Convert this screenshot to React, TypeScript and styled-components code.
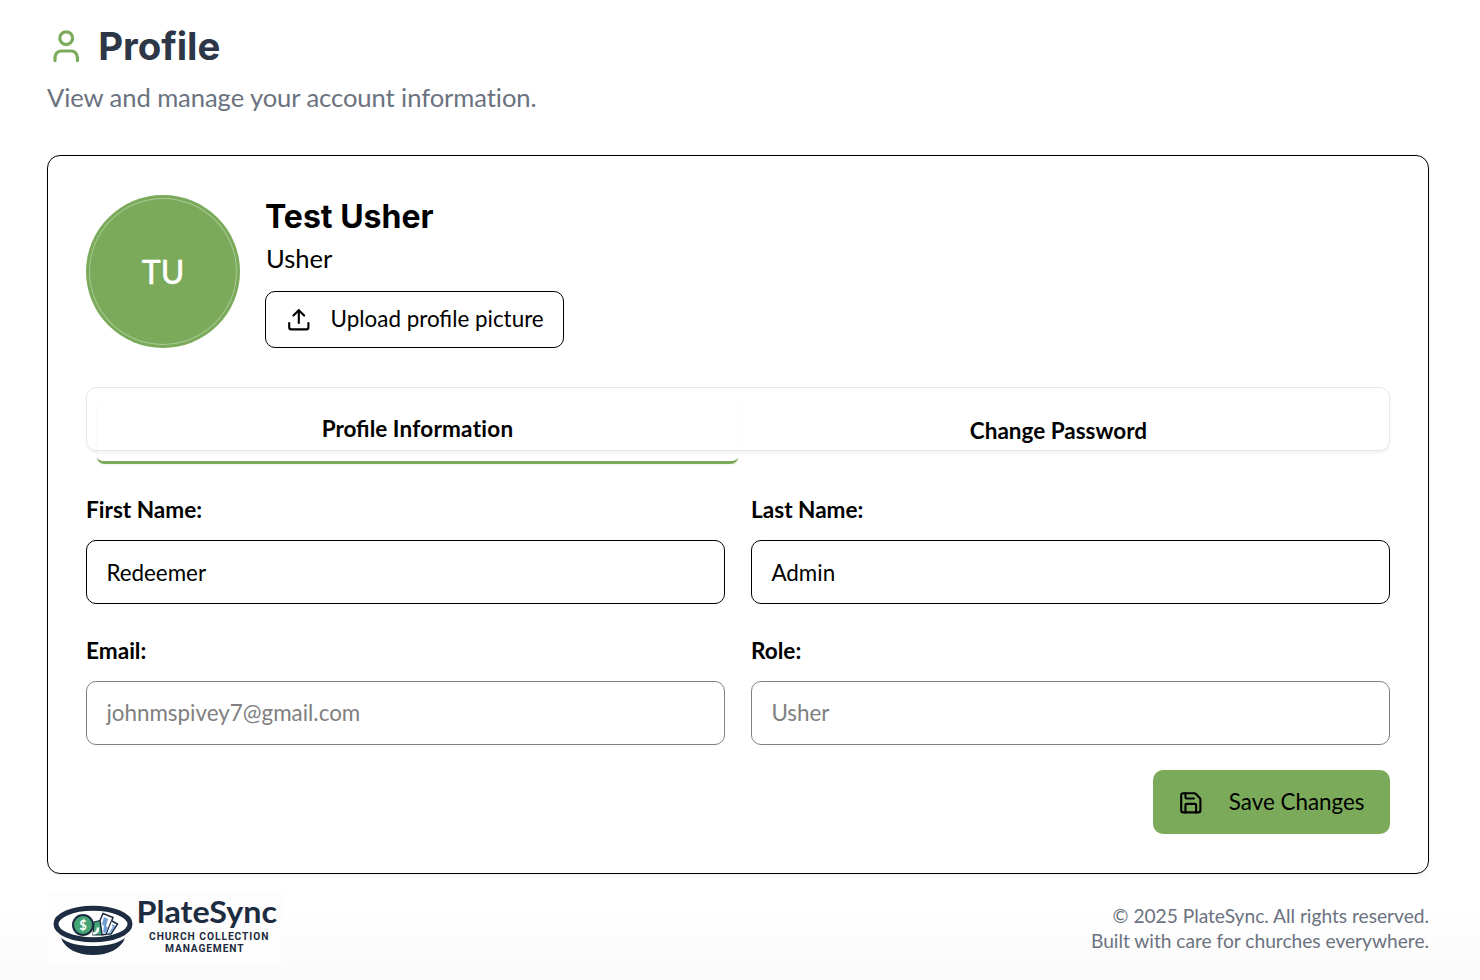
import React from "react";
import styled, { createGlobalStyle } from "styled-components";
import { Save, Upload, User } from "lucide-react";

const GlobalStyle = createGlobalStyle`
  *, *::before, *::after { box-sizing: border-box; }
  body { margin: 0; background: #fff; font-family: Lato, "Liberation Sans", sans-serif; color: #000; }
  h1, h2, p { margin: 0; }
  button, input { font: inherit; color: inherit; }
`;

const GREEN = "#7bab5a";

const Page = styled.div`
  width: 1480px;
  height: 980px;
  overflow: hidden;
  padding: 23px 51px 0 47px;
  background: linear-gradient(to bottom, #fff 0, #fff 910px, #fafafa 980px);
`;

const Header = styled.header`
  height: 132px;
`;

const TitleRow = styled.div`
  display: flex;
  align-items: center;
  gap: 12.8px;
  height: 46px;
  color: ${GREEN};
`;

const Title = styled.h1`
  font: 700 38.4px/46px Inter, sans-serif;
  letter-spacing: -0.05px;
  color: #2d3748;
`;

const Subtitle = styled.p`
  margin-top: 9px;
  font-size: 25.6px;
  line-height: 38px;
  letter-spacing: -0.08px;
  font-variant-ligatures: none;
  color: #6b7280;
`;

const Card = styled.main`
  height: 719px;
  padding: 39px 38px;
  border: 1px solid #000;
  border-radius: 13px;
  background: #fff;
  box-shadow: 0 2px 4px rgba(0, 0, 0, 0.05);
`;

const Identity = styled.section`
  display: flex;
  gap: 25px;
  height: 153px;
`;

const Avatar = styled.div`
  flex: none;
  width: 154px;
  height: 153px;
  padding: 3px;
  border-radius: 50%;
  background: ${GREEN};
`;

const AvatarFace = styled.div`
  display: flex;
  align-items: center;
  justify-content: center;
  height: 100%;
  padding-bottom: 1px;
  border: 0.5px solid rgba(255, 255, 255, 0.35);
  border-radius: 50%;
  font-size: 32px;
  font-weight: 500;
  color: #fff;
  -webkit-text-stroke: 0.3px #fff;
`;

const Details = styled.div`
  display: flex;
  flex-direction: column;
  align-items: flex-start;
`;

const Name = styled.h2`
  font: 700 32px/43px Inter, sans-serif;
`;

const RoleText = styled.p`
  padding-left: 1px;
  font-size: 25.6px;
  line-height: 41px;
  margin-bottom: 12px;
`;

const UploadButton = styled.button`
  display: flex;
  align-items: center;
  width: 299px;
  height: 57px;
  padding: 0 0 0 20px;
  gap: 19px;
  border: 1px solid #000;
  border-radius: 10px;
  background: #fff;
  font-size: 22.4px;
  white-space: nowrap;
`;

const ButtonText = styled.span`
  padding-bottom: 2px;
`;

const Tabs = styled.div`
  display: grid;
  grid-template-columns: 641px 641px;
  height: 64px;
  margin-top: 39px;
  padding: 9px 10px;
  border: 1px solid #e5e7eb;
  border-radius: 10px;
  box-shadow: 0 2px 3px rgba(0, 0, 0, 0.05);
`;

const Tab = styled.button<{ $active?: boolean }>`
  height: 67px;
  padding: ${(p) => (p.$active ? "0 0 2px" : "0")};
  border: 0;
  border-bottom: ${(p) => (p.$active ? `3px solid ${GREEN}` : "0")};
  border-radius: 7px;
  background: transparent;
  box-shadow: ${(p) => (p.$active ? "0 1px 3px rgba(0, 0, 0, 0.05)" : "none")};
  font-size: 22.5px;
  font-weight: 700;
`;

const PlainLetters = styled.span`
  font-variant-ligatures: none;
  letter-spacing: 0.25px;
`;

const Form = styled.form`
  display: grid;
  grid-template-columns: 639px 639px;
  column-gap: 26px;
  margin-top: 44px;
`;

const Field = styled.label`
  display: flex;
  flex-direction: column;
  height: 141px;
  font-size: 22.6px;
  font-weight: 700;
  line-height: 30px;
`;

const Input = styled.input`
  width: 100%;
  height: 64px;
  margin-top: 15px;
  padding: 0 19px 0 19.4px;
  border: 1px solid #000;
  border-radius: 10px;
  outline: 0;
  background: #fff;
  font-size: 22.4px;
  font-weight: 400;

  &:disabled { padding-bottom: 2px; border-color: #808080; color: #808080; }
`;

const SaveButton = styled.button`
  display: flex;
  align-items: center;
  grid-column: 2;
  justify-self: end;
  width: 237px;
  height: 64px;
  margin-top: -7px;
  padding: 1px 0 0 24.6px;
  gap: 25.6px;
  border: 0;
  border-radius: 10px;
  background: ${GREEN};
  font-size: 22.4px;
  white-space: nowrap;
`;

const Footer = styled.footer`
  display: flex;
  justify-content: space-between;
  padding-top: 19px;
`;

const Legal = styled.div`
  padding-top: 10px;
  text-align: right;
  font-size: 19.2px;
  line-height: 25px;
  letter-spacing: -0.02px;
  color: #6b7280;
`;

function Logo() {
  return (
    <svg width="237" height="69" viewBox="47 893 237 69" role="img" aria-label="PlateSync">
      <rect x="47" y="893" width="237" height="69" fill="#fdfdfd" />
      <path d="M61 938c4 11 17 17 32 17s28-6 32-17c-8 6-19 8-32 8s-24-2-32-8z" fill="#1d2c40" />
      <ellipse cx="93" cy="924" rx="37" ry="15.8" fill="#fff" stroke="#1d2c40" strokeWidth="5" />
      <path d="M94 922l8-2 1 15h-10z" fill="#46a574" stroke="#1d2c40" strokeWidth="1.2" />
      <path d="M103 913.5l10 4-7 17h-4l-2-14z" fill="#fff" stroke="#1d2c40" strokeWidth="1.5" />
      <path d="M104 917l4 2-2 7 2 2-2 5-3-1 1-6-2-2z" fill="#6d9ed8" />
      <path d="M112 921l5.5 3-6.5 10h-4" fill="#fff" stroke="#1d2c40" strokeWidth="1.5" />
      <path d="M112 925l2 1-5 8" fill="none" stroke="#6d9ed8" strokeWidth="1.4" />
      <path d="M93 933.5q5 0 5-6" fill="none" stroke="#fff" strokeWidth="2.5" />
      <circle cx="83" cy="925" r="10" fill="#46a574" stroke="#1d2c40" strokeWidth="2" />
      <g fill="#1d2c40">
        <text x="83" y="929.5" fontFamily="Lato" fontSize="13" fontWeight="700" fill="#fff" textAnchor="middle">$</text>
        <text x="136.5" y="923.3" fontFamily="Lato" fontSize="29.5" fontWeight="700" textLength="140.5" lengthAdjust="spacingAndGlyphs">PlateSync</text>
        <text x="149" y="940.3" fontFamily="Roboto" fontSize="10.2" fontWeight="700" textLength="119.5">CHURCH COLLECTION</text>
        <text x="165" y="952" fontFamily="Roboto" fontSize="10.2" fontWeight="700" textLength="78.5">MANAGEMENT</text>
      </g>
    </svg>
  );
}

export default function App() {
  return (
    <Page>
      <GlobalStyle />
      <Header>
        <TitleRow>
          <User size={38.4} />
          <Title>Profile</Title>
        </TitleRow>
        <Subtitle>View and manage your account information.</Subtitle>
      </Header>
      <Card>
        <Identity>
          <Avatar><AvatarFace>TU</AvatarFace></Avatar>
          <Details>
            <Name>Test Usher</Name>
            <RoleText>Usher</RoleText>
            <UploadButton>
              <Upload size={25.6} />
              <ButtonText>Upload profile picture</ButtonText>
            </UploadButton>
          </Details>
        </Identity>
        <Tabs>
          <Tab $active>Profile <PlainLetters>Information</PlainLetters></Tab>
          <Tab>Change Password</Tab>
        </Tabs>
        <Form>
          <Field>First Name:<Input defaultValue="Redeemer" /></Field>
          <Field>Last Name:<Input defaultValue="Admin" /></Field>
          <Field>Email:<Input defaultValue="johnmspivey7@gmail.com" disabled /></Field>
          <Field>Role:<Input defaultValue="Usher" disabled /></Field>
          <SaveButton type="button">
            <Save size={25.6} />
            <ButtonText>Save Changes</ButtonText>
          </SaveButton>
        </Form>
      </Card>
      <Footer>
        <Logo />
        <Legal>
          <p>© 2025 PlateSync. All rights reserved.</p>
          <p>Built with care for churches everywhere.</p>
        </Legal>
      </Footer>
    </Page>
  );
}
